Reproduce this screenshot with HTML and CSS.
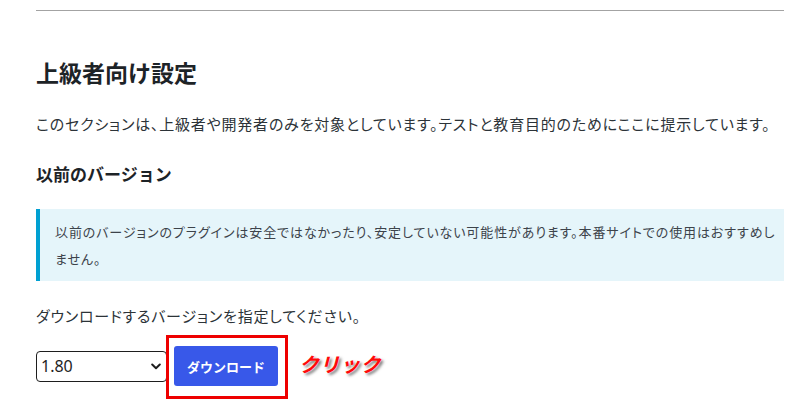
FILE: index.html
```html
<!DOCTYPE html>
<html lang="ja">
<head>
<meta charset="utf-8">
<title>上級者向け設定</title>
<link rel="stylesheet" href="styles.css">
</head>
<body>
<div class="wrap">
  <hr class="rule">
  <h2 class="title">上級者向け設定</h2>
  <p class="text">このセクションは、上級者や開発者のみを対象としています。テストと教育目的のためにここに提示しています。</p>
  <h3 class="subtitle">以前のバージョン</h3>
  <div class="notice">
    <p class="notice-text">以前のバージョンのプラグインは安全ではなかったり、安定していない可能性があります。本番サイトでの使用はおすすめし<br>ません。</p>
  </div>
  <p class="text label">ダウンロードするバージョンを指定してください。</p>
  <div class="controls">
    <div class="select-box">
      <select class="version">
        <option>1.80</option>
      </select>
      <svg class="chev" width="10" height="7" viewBox="0 0 10 7"><path d="M1.2 1.5 L5 5.2 L8.8 1.5" fill="none" stroke="#1e1e1e" stroke-width="2" stroke-linecap="round" stroke-linejoin="round"/></svg>
    </div>
    <div class="btn-wrap">
      <button class="btn">ダウンロード</button>
      <span class="frame"></span>
    </div>
    <span class="click">クリック</span>
  </div>
</div>
</body>
</html>
```
FILE: styles.css
```css
html, body {
  margin: 0;
  padding: 0;
  background: #ffffff;
}
body {
  font-family: "Noto Sans CJK JP", "Noto Sans", sans-serif;
  color: #2c3338;
}
.wrap {
  width: 748px;
  padding: 10px 0 33px 36px;
}
.rule {
  margin: 0;
  border: 0;
  border-top: 1px solid #a3a3a3;
  height: 0;
}
.title {
  margin: 45px 0 0 0;
  font-size: 23px;
  line-height: 32px;
  font-weight: 700;
  color: #1d2327;
}
.text {
  margin: 24px 0 0 0;
  font-size: 15px;
  line-height: 24px;
  font-feature-settings: "palt";
  letter-spacing: 0.8px;
  color: #2c3338;
}
.subtitle {
  margin: 25px 0 0 0;
  font-size: 17px;
  line-height: 26px;
  font-weight: 700;
  color: #1d2327;
}
.notice {
  margin-top: 22px;
  background: #e5f5fa;
  border-left: 4px solid #00a0d2;
  padding: 9px 4px 9px 15px;
}
.notice-text {
  margin: 0;
  font-size: 13px;
  line-height: 27px;
  font-feature-settings: "palt";
  letter-spacing: 0.9px;
  color: #3c434a;
}
.label {
  margin-top: 23px;
}
.controls {
  display: flex;
  align-items: center;
  margin-top: 18px;
  gap: 7px;
}
.select-box {
  position: relative;
  width: 131px;
  height: 31px;
}
.version {
  appearance: none;
  -webkit-appearance: none;
  box-sizing: border-box;
  width: 131px;
  height: 31px;
  margin: 0;
  padding: 0 20px 0 4px;
  border: 1px solid #1e1e1e;
  border-radius: 4px;
  background: #ffffff;
  font-family: "Noto Sans", "Liberation Sans", sans-serif;
  font-size: 16px;
  color: #1e1e1e;
}
.chev {
  position: absolute;
  right: 6px;
  top: 12px;
  pointer-events: none;
}
.btn-wrap {
  position: relative;
}
.btn {
  display: block;
  box-sizing: border-box;
  width: 104px;
  height: 40px;
  margin: 0;
  padding: 0 13px;
  border: 0;
  border-radius: 3px;
  background: #3858e9;
  color: #ffffff;
  font-family: "Noto Sans CJK JP", sans-serif;
  font-size: 13px;
  font-weight: 700;
  letter-spacing: 0;
}
.frame {
  position: absolute;
  left: -8px;
  top: -11px;
  right: -10px;
  bottom: -13px;
  border: 3px solid #ee0000;
  pointer-events: none;
}
.click {
  margin-left: 14px;
  margin-top: -6px;
  font-size: 20px;
  font-weight: 700;
  font-style: italic;
  color: #ff0a0a;
  letter-spacing: 0.5px;
  text-shadow: 0 0 1px #ffffff, 2px 2px 3px rgba(0, 0, 0, 0.55);
}
```
